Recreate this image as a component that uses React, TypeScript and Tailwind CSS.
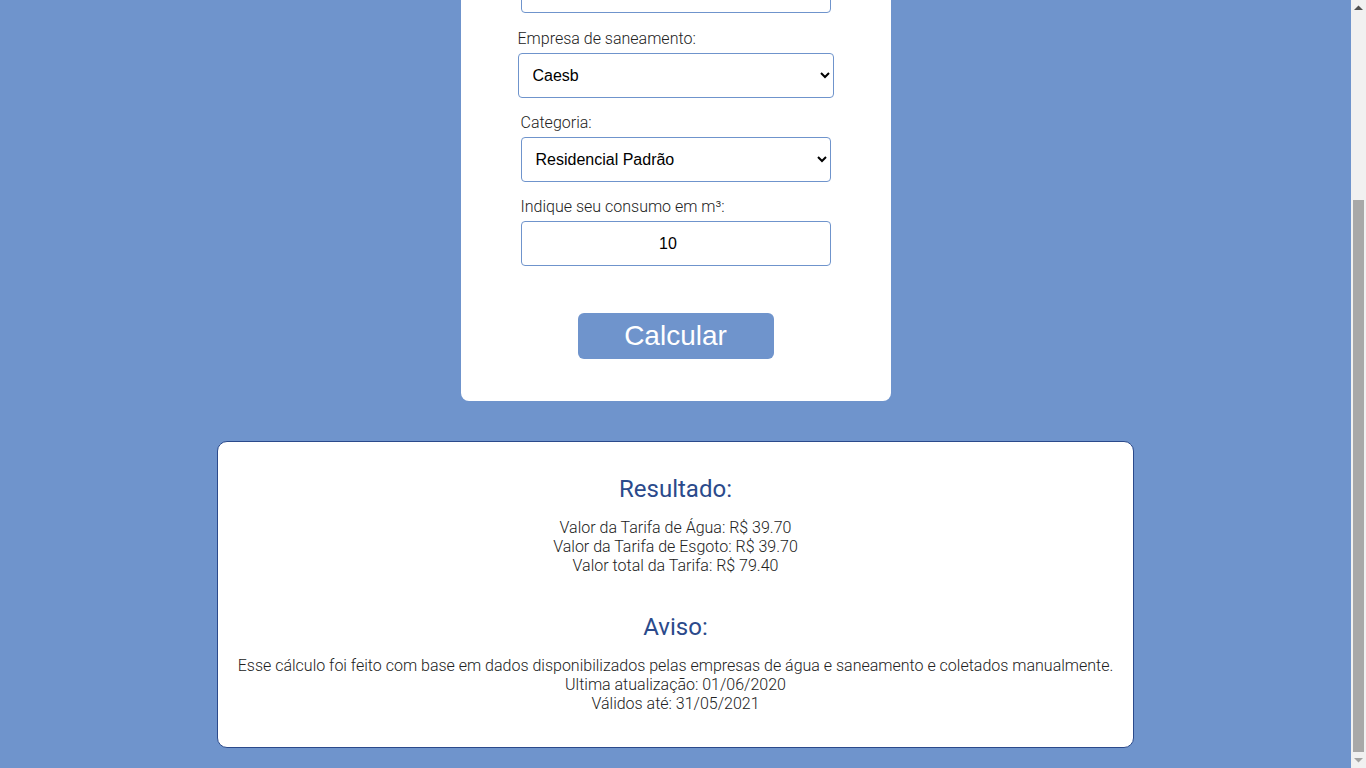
import React from "react";

export default function App() {
  const arial = "font-['Liberation_Sans',Arial,sans-serif]";
  const field = `${arial} h-[45px] border border-[#6f94cc] rounded-[4px] text-[16px] text-black bg-white`;
  const label = "text-[#222] text-[16px] leading-[19px] font-light mb-[5px]";

  return (
    <div className="w-screen h-screen flex overflow-hidden bg-[#6f94cc] font-['Roboto',sans-serif]">
      {/* Page viewport, scrolled to the bottom */}
      <div className="flex-1 h-full overflow-hidden flex flex-col justify-end items-center pb-[20px]">
        {/* Form card */}
        <div className="shrink-0 w-[430px] bg-white rounded-[8px] flex flex-col items-center pt-[24px] pb-[42px]">
          <h1 className="text-[#2b4a8b] text-[28px] leading-[34px] font-normal mb-[20px]">Simulador de Tarifa</h1>
          <div className="w-[310px] flex flex-col">
            <label className={label}>Estado:</label>
            <select className={`${field} w-[310px] pl-[10px] pr-[6px]`} defaultValue="DF">
              <option value="DF">Distrito Federal</option>
            </select>
          </div>
          <div className="w-[310px] flex flex-col mt-[15px]">
            <label className={label}>Cidade:</label>
            <input className={`${field} w-[310px] px-[12px]`} defaultValue="Brasília" />
          </div>
          <div className="w-[316px] flex flex-col mt-[16px]">
            <label className={label}>Empresa de saneamento:</label>
            <select className={`${field} w-[316px] pl-[10px] pr-[6px]`} defaultValue="Caesb">
              <option value="Caesb">Caesb</option>
            </select>
          </div>
          <div className="w-[310px] flex flex-col mt-[15px]">
            <label className={label}>Categoria:</label>
            <select className={`${field} w-[310px] pl-[10px] pr-[6px]`} defaultValue="rp">
              <option value="rp">Residencial Padrão</option>
            </select>
          </div>
          <div className="w-[310px] flex flex-col mt-[15px]">
            <label className={label}>Indique seu consumo em m³:</label>
            <input type="number" className={`${field} w-[310px] px-[12px] text-center`} defaultValue="10" />
          </div>
          <button className={`${arial} mt-[47px] w-[196px] h-[46px] bg-[#6f94cc] rounded-[6px] text-white text-[28px] leading-[32px]`}>Calcular</button>
        </div>

        {/* Result box */}
        <div className="shrink-0 mt-[40px] w-[917px] bg-white border border-[#2b4a8b] rounded-[10px] flex flex-col items-center text-center pt-[33px] pb-[34px]">
          <h2 className="text-[#2b4a8b] text-[24px] leading-[28px] font-normal">Resultado:</h2>
          <div className="mt-[15px] text-[#222] text-[16px] leading-[19px] font-light">
            <p>Valor da Tarifa de Água: R$ 39.70</p>
            <p>Valor da Tarifa de Esgoto: R$ 39.70</p>
            <p>Valor total da Tarifa: R$ 79.40</p>
          </div>
          <h2 className="mt-[38px] text-[#2b4a8b] text-[24px] leading-[28px] font-normal">Aviso:</h2>
          <div className="mt-[15px] text-[#222] text-[16px] leading-[19px] font-light">
            <p>Esse cálculo foi feito com base em dados disponibilizados pelas empresas de água e saneamento e coletados manualmente.</p>
            <p>Ultima atualização: 01/06/2020</p>
            <p>Válidos até: 31/05/2021</p>
          </div>
        </div>
      </div>

      {/* Scrollbar */}
      <div className="w-[15px] h-full shrink-0 bg-[#f1f1f1] flex flex-col items-center">
        <div className="h-[15px] w-full flex items-center justify-center">
          <svg width="9" height="5" viewBox="0 0 9 5"><path d="M0 5 L4.5 0.5 L9 5 Z" fill="#505050" /></svg>
        </div>
        <div className="h-[185px]" />
        <div className="w-[11px] h-[552px] bg-[#a8a8a8] ml-[2px] mr-[2px]" />
        <div className="flex-1 w-full flex items-center justify-center">
          <svg width="9" height="5" viewBox="0 0 9 5"><path d="M0 0 L4.5 4.5 L9 0 Z" fill="#a3a3a3" /></svg>
        </div>
      </div>
    </div>
  );
}
